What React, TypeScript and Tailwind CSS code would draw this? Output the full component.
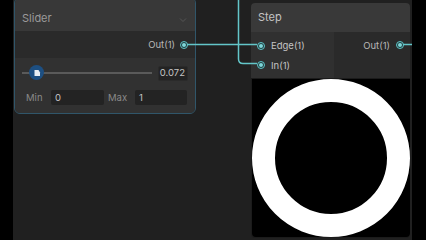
import React from "react";

const font = { fontFamily: "Inter, 'Noto Sans', sans-serif" };

function Port() {
  return (
    <span className="flex h-[8px] w-[8px] items-center justify-center rounded-full border border-[#5fc3c6] bg-[#1e3a3c]">
      <span className="h-[4px] w-[4px] rounded-full bg-[#7fd6d8]" />
    </span>
  );
}

export default function App() {
  return (
    <div className="flex h-[240px] w-[426px] overflow-hidden bg-black" style={font}>
      <div className="w-[13px] shrink-0 bg-black" />
      <div className="relative h-full w-[399px] shrink-0 bg-[#202020]">
        {/* Slider node */}
        <div className="absolute left-[1px] top-[-3px] flex h-[117px] w-[182px] flex-col overflow-hidden rounded-[6px] border border-[#30566a] bg-[#2a2a2a]">
          <div className="flex h-[33px] shrink-0 items-end justify-between bg-[#383838] pb-[7px] pl-[7px] pr-[8px]">
            <span className="text-[11px] leading-none text-[#9a9a9a]">Slider</span>
            <svg width="8" height="6" viewBox="0 0 8 6" className="mb-[1px]">
              <path d="M1 1.5 L4 4.5 L7 1.5" stroke="#555" strokeWidth="1" fill="none" />
            </svg>
          </div>
          <div className="flex h-[27px] shrink-0 items-center justify-end gap-[5px] bg-[#2a2a2a] pr-[7px]">
            <span className="text-[9.5px] leading-none text-[#b8b8b8]">Out(1)</span>
            <Port />
          </div>
          <div className="flex flex-1 flex-col gap-[9px] bg-[#313131] px-[7px] pt-[7px]">
            <div className="flex items-center gap-[6px]">
              <div className="relative flex h-[16px] flex-1 items-center">
                <div className="h-[2px] w-full bg-[#5a5a5a]" />
                <div className="absolute left-[7px] top-[0px] flex h-[15px] w-[15px] items-center justify-center rounded-full bg-[#1d4f82]">
                  <svg width="8" height="8" viewBox="0 0 8 8">
                    <path d="M1.5 1 L5.5 1 L7 3.5 L7 7 L1.5 7 Z" fill="#e8eef4" />
                  </svg>
                </div>
              </div>
              <div className="flex h-[15px] w-[30px] items-center justify-end rounded-[2px] border border-[#2a2a2a] bg-[#232323] pr-[2px] text-[9.5px] leading-none text-[#c4c4c4]">
                0.072
              </div>
            </div>
            <div className="flex items-center text-[9.5px] leading-none">
              <span className="w-[29px] pl-[4px] text-[#8a8a8a]">Min</span>
              <div className="flex h-[15px] w-[53px] items-center rounded-[2px] bg-[#232323] pl-[4px] text-[#c4c4c4]">0</div>
              <span className="w-[31px] pl-[4px] text-[#8a8a8a]">Max</span>
              <div className="flex h-[15px] w-[52px] items-center rounded-[2px] bg-[#232323] pl-[4px] text-[#c4c4c4]">1</div>
            </div>
          </div>
        </div>

        {/* Step node */}
        <div className="absolute left-[238px] top-[3px] flex h-[235px] w-[159px] flex-col overflow-hidden rounded-[4px] bg-[#1b1b1b]">
          <div className="flex h-[29px] shrink-0 items-center bg-[#393939] pl-[7px]">
            <span className="text-[11px] leading-none text-[#c4c4c4]">Step</span>
          </div>
          <div className="flex h-[46px] shrink-0">
            <div className="flex w-[83px] flex-col gap-[10px] bg-[#303030] pl-[6px] pt-[9px]">
              <div className="flex items-center gap-[6px]">
                <Port />
                <span className="text-[9.5px] leading-none text-[#c4c4c4]">Edge(1)</span>
              </div>
              <div className="flex items-center gap-[6px]">
                <Port />
                <span className="text-[9.5px] leading-none text-[#c4c4c4]">In(1)</span>
              </div>
            </div>
            <div className="flex flex-1 items-start justify-end gap-[6px] bg-[#2a2a2a] pr-[6px] pt-[9px]">
              <span className="text-[9.5px] leading-none text-[#b8b8b8]">Out(1)</span>
              <Port />
            </div>
          </div>
          <div className="mx-auto mt-[1px] flex h-[158px] w-[158px] items-center justify-center rounded-b-[4px] bg-black">
            <svg width="158" height="158" viewBox="0 0 158 158">
              <circle cx="79" cy="79" r="67.5" fill="none" stroke="#ffffff" strokeWidth="23" />
            </svg>
          </div>
        </div>

        {/* Wires */}
        <svg className="pointer-events-none absolute left-0 top-0" width="399" height="240" viewBox="0 0 399 240">
          <g stroke="#63c6c9" strokeWidth="1.5" fill="none">
            <path d="M174 44.5 L244 44.5" />
            <path d="M225.5 0 L225.5 59 Q225.5 63.5 230 63.5 L244 63.5" />
            <path d="M390 44.5 L399 44.5" />
          </g>
        </svg>
      </div>
      <div className="flex-1 bg-black" />
    </div>
  );
}
